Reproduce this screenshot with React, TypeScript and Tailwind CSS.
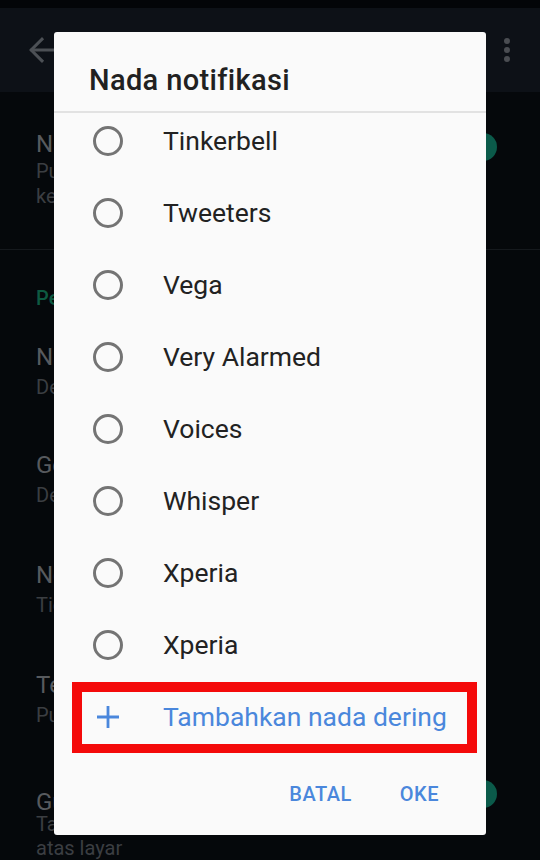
const tones = [
  "Tinkerbell",
  "Tweeters",
  "Vega",
  "Very Alarmed",
  "Voices",
  "Whisper",
  "Xperia",
  "Xperia",
];

function Toggle({ className = "" }: { className?: string }) {
  return (
    <div className={`relative w-[52px] h-[28px] shrink-0 ${className}`}>
      <div className="absolute left-[4px] right-[6px] top-[7px] h-[14px] rounded-full bg-[#08342b]" />
      <div className="absolute right-0 top-0 w-[28px] h-[28px] rounded-full bg-[#0b5a4a]" />
    </div>
  );
}

function SettingRow({
  title,
  lines,
  className = "",
  toggle,
}: {
  title: string;
  lines: string[];
  className?: string;
  toggle?: string;
}) {
  return (
    <div className={`flex items-start justify-between pl-[36px] pr-[43px] ${className}`}>
      <div className="flex flex-col">
        <span className="text-[24px] leading-[30px] text-[#575a5e]">{title}</span>
        {lines.map((l, i) => (
          <span key={i} className="text-[20px] leading-[25px] text-[#3b3e42]">
            {l}
          </span>
        ))}
      </div>
      {toggle && <Toggle className={toggle} />}
    </div>
  );
}

function Radio() {
  return <span className="w-[30px] h-[30px] rounded-full border-[3px] border-[#747474] shrink-0" />;
}

export default function App() {
  return (
    <div className="relative w-[540px] h-[860px] overflow-hidden bg-[#05080b] font-['Roboto','Liberation_Sans',sans-serif]">
      {/* settings screen behind the dialog */}
      <div className="h-[8px] bg-[#030508]" />
      <div className="h-[84px] bg-[#0d1117] flex items-center justify-between pl-[22px] pr-[30px]">
        <div className="flex items-center gap-[30px]">
          <svg width="40" height="40" viewBox="0 0 24 24" fill="none" stroke="#4c5055" strokeWidth="1.8" strokeLinecap="square">
            <path d="M19 12H6" />
            <path d="M12 18.5 5.5 12 12 5.5" />
          </svg>
          <span className="text-[24px] font-medium text-[#6b6e72]">Notifikasi</span>
        </div>
        <div className="flex flex-col gap-[3px]">
          <span className="w-[6px] h-[6px] rounded-full bg-[#4a4d52]" />
          <span className="w-[6px] h-[6px] rounded-full bg-[#4a4d52]" />
          <span className="w-[6px] h-[6px] rounded-full bg-[#4a4d52]" />
        </div>
      </div>

      <SettingRow
        title="Nada percakapan"
        lines={["Putar suara untuk pesan masuk dan", "keluar"]}
        className="pt-[37px] h-[157px]"
        toggle="mt-[4px]"
      />
      <div className="h-px bg-[#15191d]" />
      <div className="h-[70px] pl-[36px] pt-[36px] text-[20px] leading-[24px] font-medium text-[#0d5a41]">Pesan</div>
      <SettingRow title="Nada notifikasi" lines={["Default (Xperia)"]} className="h-[110px] pt-[22px] [&_span+span]:leading-[30px]" />
      <SettingRow title="Getar" lines={["Default"]} className="h-[110px] pt-[20px] [&_span+span]:leading-[30px]" />
      <SettingRow title="Notifikasi pop-up" lines={["Tidak ada pop-up"]} className="h-[110px] pt-[20px] [&_span+span]:leading-[30px]" />
      <SettingRow title="Terang" lines={["Putih"]} className="h-[110px] pt-[20px] [&_span+span]:leading-[30px]" />
      <SettingRow
        title="Gunakan notifikasi prioritas tinggi"
        lines={["Tampilkan pratinjau notifikasi di bagian", "atas layar"]}
        className="pt-[27px] [&_span+span]:leading-[24px] [&_span:nth-child(2)]:-mt-[5px]"
        toggle="mt-[-7px]"
      />

      {/* dialog */}
      <div className="absolute left-[54px] top-[32px] w-[432px] h-[803px] bg-[#fafafa] rounded-[3px] flex flex-col overflow-hidden">
        <div className="h-[79px] pl-[35px] pt-[30px] text-[29px] leading-[36px] tracking-[0.35px] font-medium text-[#212121]">
          Nada notifikasi
        </div>
        <div className="h-[2px] bg-[#e2e2e2]" />
        <div className="h-[640px] overflow-hidden">
          <div className="-mt-[8px]">
            {tones.map((t, i) => (
              <div key={i} className="h-[72px] flex items-center pl-[39px]">
                <Radio />
                <span className="ml-[40px] text-[26.5px] text-[#222222]">{t}</span>
              </div>
            ))}
            <div className="relative h-[72px] flex items-center pl-[43px]">
              <svg width="22" height="22" viewBox="0 0 22 22" stroke="#4a87dc" strokeWidth="2.8">
                <path d="M0 11h22M11 0v22" />
              </svg>
              <span className="ml-[44px] text-[26.5px] text-[#4a87dc]">Tambahkan nada dering</span>
              <div className="absolute left-[18px] right-[9px] top-[1px] h-[72px] border-[10px] border-[#f40a0a]" />
            </div>
          </div>
        </div>
        <div className="h-[82px] flex items-center justify-end pr-[47px] gap-[48px] text-[20px] font-medium tracking-[0.5px] text-[#4a87dc]">
          <span>BATAL</span>
          <span>OKE</span>
        </div>
      </div>
    </div>
  );
}
